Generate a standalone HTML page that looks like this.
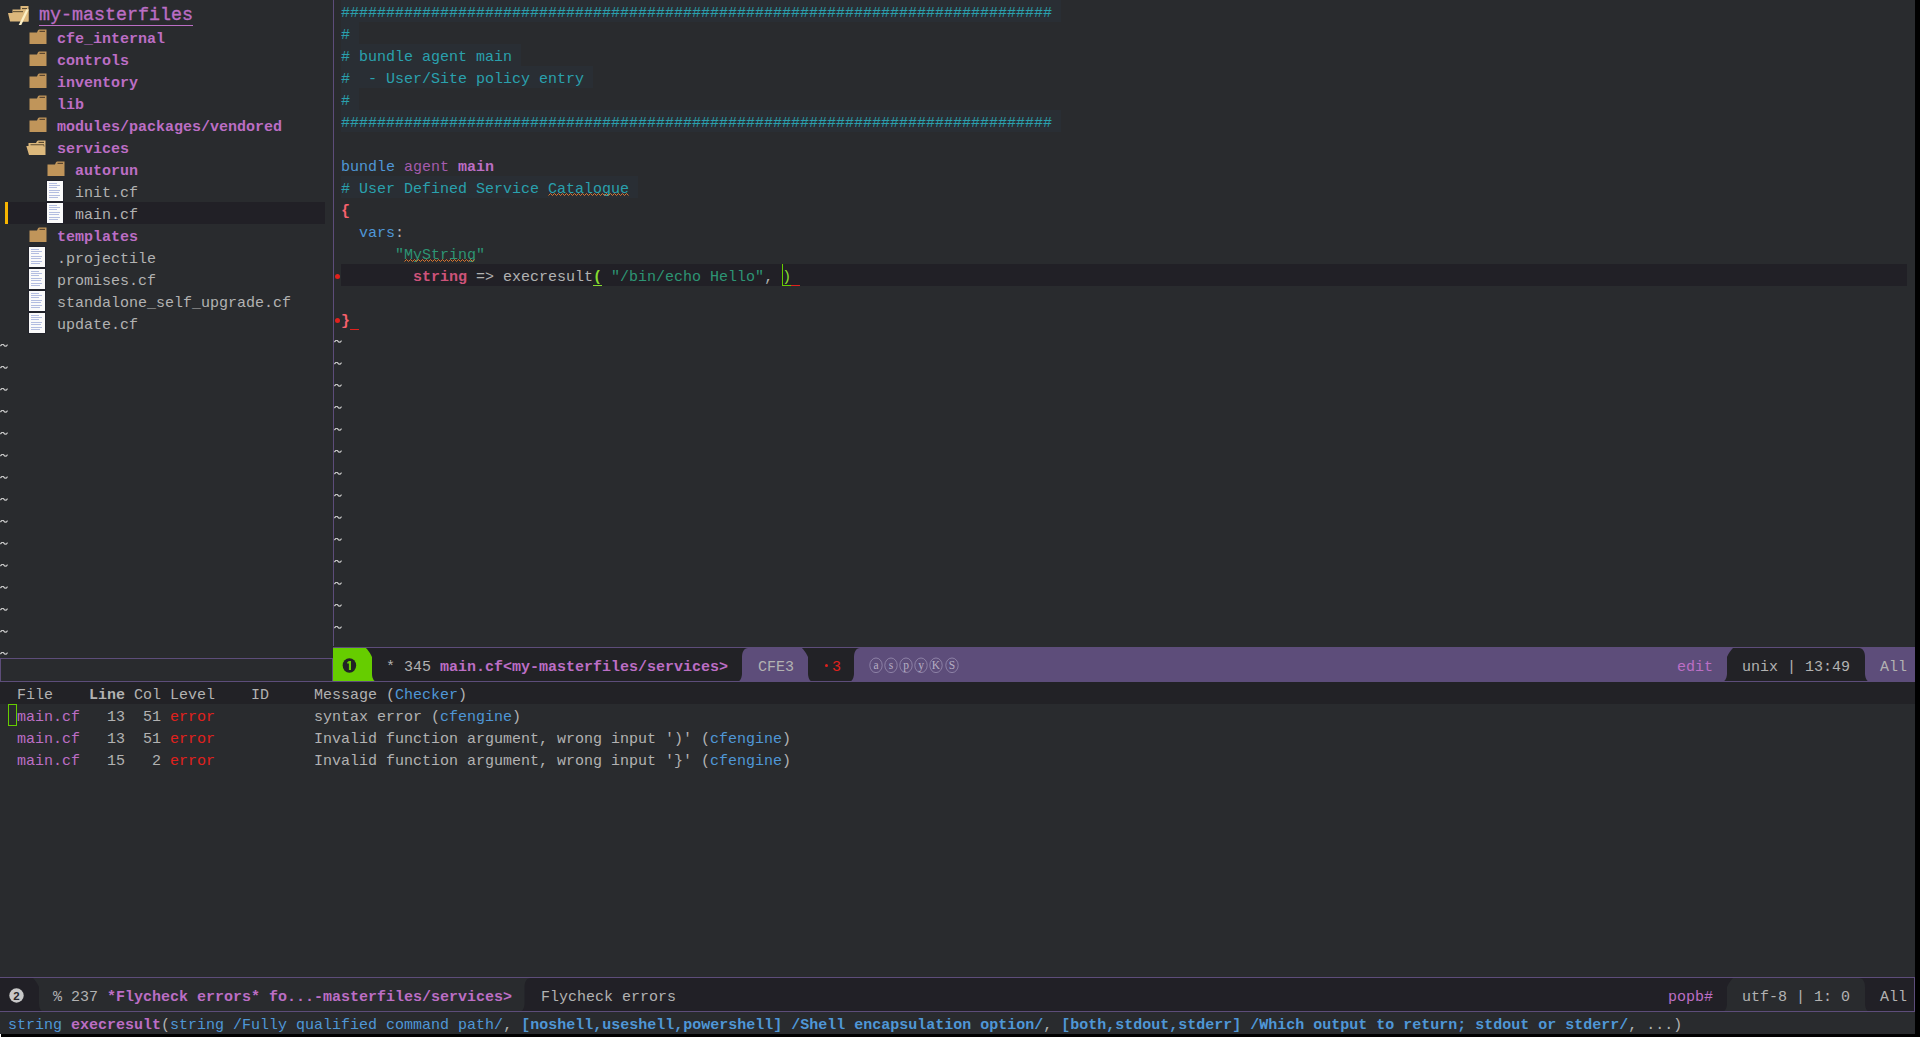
<!DOCTYPE html>
<html><head><meta charset="utf-8"><title>emacs</title>
<style>
html,body{margin:0;padding:0;}
body{width:1920px;height:1037px;overflow:hidden;position:relative;background:#292b2e;font-family:"Liberation Mono",monospace;}
.t{position:absolute;white-space:pre;font-size:15px;line-height:22px;color:#b2b2b2;}
.r{position:absolute;}
</style></head><body>
<div class="r" style="left:333px;top:0px;width:1px;height:646px;background:#5d4d7a;"></div>
<svg class="r" style="left:8px;top:5px" width="22" height="21" viewBox="0 0 22 21"><path d="M12.5 1 L20.5 1 L20.5 16.5 L12.5 16.5 Z" fill="#dcb87c"/><path d="M14 3 L19 3 L19 4.2 L14 4.2 Z" fill="#5a4a30"/><path d="M4.5 4.5 L20.5 4.5 L20.5 16.5 L2 16.5 L0 8 L4.5 8 Z" fill="#dcb87c"/><path d="M5 6 L15 6 L15 7.2 L5 7.2 Z" fill="#6b5a3a"/><path d="M18.2 4.5 L20.8 4.5 L13.3 20 L10.7 20 Z" fill="#fcefc4"/></svg>
<div class="t" style="left:39px;top:3px;font-size:18.33px;line-height:26px;color:#bc6ec5;-webkit-text-stroke:0.35px;">my-masterfiles</div>
<div class="r" style="left:39px;top:25px;width:154px;height:1px;background:#bc6ec5;"></div>
<svg class="r" style="left:29px;top:29px" width="18" height="16" viewBox="0 0 18 16"><path d="M0.5 3.5 L8 3.5 Q9 0.5 10 0.5 L17.5 0.5 L17.5 15 L0.5 15 Z" fill="#c0955a"/><path d="M10.5 1.8 L16 1.8 L16 3 L10.5 3 Z" fill="#5a4630"/></svg>
<div class="t" style="left:57px;top:29px;"><span style="color:#bc6ec5;font-weight:bold;">cfe_internal</span></div>
<svg class="r" style="left:29px;top:51px" width="18" height="16" viewBox="0 0 18 16"><path d="M0.5 3.5 L8 3.5 Q9 0.5 10 0.5 L17.5 0.5 L17.5 15 L0.5 15 Z" fill="#c0955a"/><path d="M10.5 1.8 L16 1.8 L16 3 L10.5 3 Z" fill="#5a4630"/></svg>
<div class="t" style="left:57px;top:51px;"><span style="color:#bc6ec5;font-weight:bold;">controls</span></div>
<svg class="r" style="left:29px;top:73px" width="18" height="16" viewBox="0 0 18 16"><path d="M0.5 3.5 L8 3.5 Q9 0.5 10 0.5 L17.5 0.5 L17.5 15 L0.5 15 Z" fill="#c0955a"/><path d="M10.5 1.8 L16 1.8 L16 3 L10.5 3 Z" fill="#5a4630"/></svg>
<div class="t" style="left:57px;top:73px;"><span style="color:#bc6ec5;font-weight:bold;">inventory</span></div>
<svg class="r" style="left:29px;top:95px" width="18" height="16" viewBox="0 0 18 16"><path d="M0.5 3.5 L8 3.5 Q9 0.5 10 0.5 L17.5 0.5 L17.5 15 L0.5 15 Z" fill="#c0955a"/><path d="M10.5 1.8 L16 1.8 L16 3 L10.5 3 Z" fill="#5a4630"/></svg>
<div class="t" style="left:57px;top:95px;"><span style="color:#bc6ec5;font-weight:bold;">lib</span></div>
<svg class="r" style="left:29px;top:117px" width="18" height="16" viewBox="0 0 18 16"><path d="M0.5 3.5 L8 3.5 Q9 0.5 10 0.5 L17.5 0.5 L17.5 15 L0.5 15 Z" fill="#c0955a"/><path d="M10.5 1.8 L16 1.8 L16 3 L10.5 3 Z" fill="#5a4630"/></svg>
<div class="t" style="left:57px;top:117px;"><span style="color:#bc6ec5;font-weight:bold;">modules/packages/vendored</span></div>
<svg class="r" style="left:26px;top:139.5px" width="21" height="16" viewBox="0 0 21 16"><path d="M2.5 3 L10 3 Q11 0.5 12 0.5 L19.5 0.5 L19.5 15 L3 15 L0.3 6 L2.5 6 Z" fill="#dcb87c"/><path d="M12.5 1.8 L18 1.8 L18 3 L12.5 3 Z" fill="#5a4a30"/><path d="M4.5 4.2 L18 4.2 L18.5 6.5 L17.7 6.5 L17.5 5.3 L4.5 5.3 Z" fill="#5a4a30"/></svg>
<div class="t" style="left:57px;top:139px;"><span style="color:#bc6ec5;font-weight:bold;">services</span></div>
<svg class="r" style="left:47px;top:161px" width="18" height="16" viewBox="0 0 18 16"><path d="M0.5 3.5 L8 3.5 Q9 0.5 10 0.5 L17.5 0.5 L17.5 15 L0.5 15 Z" fill="#c0955a"/><path d="M10.5 1.8 L16 1.8 L16 3 L10.5 3 Z" fill="#5a4630"/></svg>
<div class="t" style="left:75px;top:161px;"><span style="color:#bc6ec5;font-weight:bold;">autorun</span></div>
<svg class="r" style="left:46px;top:180px" width="18" height="22" viewBox="-1 -1 18 22"><rect x="-1" y="-1" width="18" height="22" fill="#1c1e2a" opacity="0.6"/><rect x="0" y="0" width="16" height="20" fill="#fafafa"/><rect x="2" y="2" width="8" height="1" fill="#b3bde0"/><rect x="2" y="4" width="11" height="1" fill="#b3bde0"/><rect x="2" y="6" width="8" height="1" fill="#b3bde0"/><rect x="2" y="9" width="11" height="1" fill="#b3bde0"/><rect x="2" y="11" width="10" height="1" fill="#b3bde0"/><rect x="2" y="14" width="11" height="1" fill="#b3bde0"/><rect x="2" y="16" width="9" height="1" fill="#b3bde0"/></svg>
<div class="t" style="left:75px;top:183px;"><span style="color:#b2b2b2;">init.cf</span></div>
<div class="r" style="left:8px;top:202px;width:317px;height:22px;background:#212026;"></div>
<div class="r" style="left:5px;top:202px;width:3px;height:22px;background:#f7b500;"></div>
<svg class="r" style="left:46px;top:202px" width="18" height="22" viewBox="-1 -1 18 22"><rect x="-1" y="-1" width="18" height="22" fill="#1c1e2a" opacity="0.6"/><rect x="0" y="0" width="16" height="20" fill="#fafafa"/><rect x="2" y="2" width="8" height="1" fill="#b3bde0"/><rect x="2" y="4" width="11" height="1" fill="#b3bde0"/><rect x="2" y="6" width="8" height="1" fill="#b3bde0"/><rect x="2" y="9" width="11" height="1" fill="#b3bde0"/><rect x="2" y="11" width="10" height="1" fill="#b3bde0"/><rect x="2" y="14" width="11" height="1" fill="#b3bde0"/><rect x="2" y="16" width="9" height="1" fill="#b3bde0"/></svg>
<div class="t" style="left:75px;top:205px;"><span style="color:#b2b2b2;">main.cf</span></div>
<svg class="r" style="left:29px;top:227px" width="18" height="16" viewBox="0 0 18 16"><path d="M0.5 3.5 L8 3.5 Q9 0.5 10 0.5 L17.5 0.5 L17.5 15 L0.5 15 Z" fill="#c0955a"/><path d="M10.5 1.8 L16 1.8 L16 3 L10.5 3 Z" fill="#5a4630"/></svg>
<div class="t" style="left:57px;top:227px;"><span style="color:#bc6ec5;font-weight:bold;">templates</span></div>
<svg class="r" style="left:28px;top:246px" width="18" height="22" viewBox="-1 -1 18 22"><rect x="-1" y="-1" width="18" height="22" fill="#1c1e2a" opacity="0.6"/><rect x="0" y="0" width="16" height="20" fill="#fafafa"/><rect x="2" y="2" width="8" height="1" fill="#b3bde0"/><rect x="2" y="4" width="11" height="1" fill="#b3bde0"/><rect x="2" y="6" width="8" height="1" fill="#b3bde0"/><rect x="2" y="9" width="11" height="1" fill="#b3bde0"/><rect x="2" y="11" width="10" height="1" fill="#b3bde0"/><rect x="2" y="14" width="11" height="1" fill="#b3bde0"/><rect x="2" y="16" width="9" height="1" fill="#b3bde0"/></svg>
<div class="t" style="left:57px;top:249px;"><span style="color:#b2b2b2;">.projectile</span></div>
<svg class="r" style="left:28px;top:268px" width="18" height="22" viewBox="-1 -1 18 22"><rect x="-1" y="-1" width="18" height="22" fill="#1c1e2a" opacity="0.6"/><rect x="0" y="0" width="16" height="20" fill="#fafafa"/><rect x="2" y="2" width="8" height="1" fill="#b3bde0"/><rect x="2" y="4" width="11" height="1" fill="#b3bde0"/><rect x="2" y="6" width="8" height="1" fill="#b3bde0"/><rect x="2" y="9" width="11" height="1" fill="#b3bde0"/><rect x="2" y="11" width="10" height="1" fill="#b3bde0"/><rect x="2" y="14" width="11" height="1" fill="#b3bde0"/><rect x="2" y="16" width="9" height="1" fill="#b3bde0"/></svg>
<div class="t" style="left:57px;top:271px;"><span style="color:#b2b2b2;">promises.cf</span></div>
<svg class="r" style="left:28px;top:290px" width="18" height="22" viewBox="-1 -1 18 22"><rect x="-1" y="-1" width="18" height="22" fill="#1c1e2a" opacity="0.6"/><rect x="0" y="0" width="16" height="20" fill="#fafafa"/><rect x="2" y="2" width="8" height="1" fill="#b3bde0"/><rect x="2" y="4" width="11" height="1" fill="#b3bde0"/><rect x="2" y="6" width="8" height="1" fill="#b3bde0"/><rect x="2" y="9" width="11" height="1" fill="#b3bde0"/><rect x="2" y="11" width="10" height="1" fill="#b3bde0"/><rect x="2" y="14" width="11" height="1" fill="#b3bde0"/><rect x="2" y="16" width="9" height="1" fill="#b3bde0"/></svg>
<div class="t" style="left:57px;top:293px;"><span style="color:#b2b2b2;">standalone_self_upgrade.cf</span></div>
<svg class="r" style="left:28px;top:312px" width="18" height="22" viewBox="-1 -1 18 22"><rect x="-1" y="-1" width="18" height="22" fill="#1c1e2a" opacity="0.6"/><rect x="0" y="0" width="16" height="20" fill="#fafafa"/><rect x="2" y="2" width="8" height="1" fill="#b3bde0"/><rect x="2" y="4" width="11" height="1" fill="#b3bde0"/><rect x="2" y="6" width="8" height="1" fill="#b3bde0"/><rect x="2" y="9" width="11" height="1" fill="#b3bde0"/><rect x="2" y="11" width="10" height="1" fill="#b3bde0"/><rect x="2" y="14" width="11" height="1" fill="#b3bde0"/><rect x="2" y="16" width="9" height="1" fill="#b3bde0"/></svg>
<div class="t" style="left:57px;top:315px;"><span style="color:#b2b2b2;">update.cf</span></div>
<svg class="r" style="left:0px;top:343px" width="8" height="5" viewBox="0 0 8 5"><path d="M0.4 3 L1.8 1.5 L3.3 1.5 L4.8 3.2 L6.2 3.2 L7.6 1.6" stroke="#c6c6c6" stroke-width="1.2" fill="none" stroke-linejoin="round"/></svg>
<svg class="r" style="left:0px;top:365px" width="8" height="5" viewBox="0 0 8 5"><path d="M0.4 3 L1.8 1.5 L3.3 1.5 L4.8 3.2 L6.2 3.2 L7.6 1.6" stroke="#c6c6c6" stroke-width="1.2" fill="none" stroke-linejoin="round"/></svg>
<svg class="r" style="left:0px;top:387px" width="8" height="5" viewBox="0 0 8 5"><path d="M0.4 3 L1.8 1.5 L3.3 1.5 L4.8 3.2 L6.2 3.2 L7.6 1.6" stroke="#c6c6c6" stroke-width="1.2" fill="none" stroke-linejoin="round"/></svg>
<svg class="r" style="left:0px;top:409px" width="8" height="5" viewBox="0 0 8 5"><path d="M0.4 3 L1.8 1.5 L3.3 1.5 L4.8 3.2 L6.2 3.2 L7.6 1.6" stroke="#c6c6c6" stroke-width="1.2" fill="none" stroke-linejoin="round"/></svg>
<svg class="r" style="left:0px;top:431px" width="8" height="5" viewBox="0 0 8 5"><path d="M0.4 3 L1.8 1.5 L3.3 1.5 L4.8 3.2 L6.2 3.2 L7.6 1.6" stroke="#c6c6c6" stroke-width="1.2" fill="none" stroke-linejoin="round"/></svg>
<svg class="r" style="left:0px;top:453px" width="8" height="5" viewBox="0 0 8 5"><path d="M0.4 3 L1.8 1.5 L3.3 1.5 L4.8 3.2 L6.2 3.2 L7.6 1.6" stroke="#c6c6c6" stroke-width="1.2" fill="none" stroke-linejoin="round"/></svg>
<svg class="r" style="left:0px;top:475px" width="8" height="5" viewBox="0 0 8 5"><path d="M0.4 3 L1.8 1.5 L3.3 1.5 L4.8 3.2 L6.2 3.2 L7.6 1.6" stroke="#c6c6c6" stroke-width="1.2" fill="none" stroke-linejoin="round"/></svg>
<svg class="r" style="left:0px;top:497px" width="8" height="5" viewBox="0 0 8 5"><path d="M0.4 3 L1.8 1.5 L3.3 1.5 L4.8 3.2 L6.2 3.2 L7.6 1.6" stroke="#c6c6c6" stroke-width="1.2" fill="none" stroke-linejoin="round"/></svg>
<svg class="r" style="left:0px;top:519px" width="8" height="5" viewBox="0 0 8 5"><path d="M0.4 3 L1.8 1.5 L3.3 1.5 L4.8 3.2 L6.2 3.2 L7.6 1.6" stroke="#c6c6c6" stroke-width="1.2" fill="none" stroke-linejoin="round"/></svg>
<svg class="r" style="left:0px;top:541px" width="8" height="5" viewBox="0 0 8 5"><path d="M0.4 3 L1.8 1.5 L3.3 1.5 L4.8 3.2 L6.2 3.2 L7.6 1.6" stroke="#c6c6c6" stroke-width="1.2" fill="none" stroke-linejoin="round"/></svg>
<svg class="r" style="left:0px;top:563px" width="8" height="5" viewBox="0 0 8 5"><path d="M0.4 3 L1.8 1.5 L3.3 1.5 L4.8 3.2 L6.2 3.2 L7.6 1.6" stroke="#c6c6c6" stroke-width="1.2" fill="none" stroke-linejoin="round"/></svg>
<svg class="r" style="left:0px;top:585px" width="8" height="5" viewBox="0 0 8 5"><path d="M0.4 3 L1.8 1.5 L3.3 1.5 L4.8 3.2 L6.2 3.2 L7.6 1.6" stroke="#c6c6c6" stroke-width="1.2" fill="none" stroke-linejoin="round"/></svg>
<svg class="r" style="left:0px;top:607px" width="8" height="5" viewBox="0 0 8 5"><path d="M0.4 3 L1.8 1.5 L3.3 1.5 L4.8 3.2 L6.2 3.2 L7.6 1.6" stroke="#c6c6c6" stroke-width="1.2" fill="none" stroke-linejoin="round"/></svg>
<svg class="r" style="left:0px;top:629px" width="8" height="5" viewBox="0 0 8 5"><path d="M0.4 3 L1.8 1.5 L3.3 1.5 L4.8 3.2 L6.2 3.2 L7.6 1.6" stroke="#c6c6c6" stroke-width="1.2" fill="none" stroke-linejoin="round"/></svg>
<svg class="r" style="left:0px;top:651px" width="8" height="5" viewBox="0 0 8 5"><path d="M0.4 3 L1.8 1.5 L3.3 1.5 L4.8 3.2 L6.2 3.2 L7.6 1.6" stroke="#c6c6c6" stroke-width="1.2" fill="none" stroke-linejoin="round"/></svg>
<div class="r" style="left:0;top:658px;width:331px;height:22px;border:1px solid #5d4d7a;background:#292b2e"></div>
<div class="r" style="left:341px;top:0px;width:720px;height:22px;background:#292e34;"></div>
<div class="t" style="left:341px;top:3px;"><span style="color:#2aa1ae;">###############################################################################</span></div>
<div class="r" style="left:341px;top:22px;width:18px;height:22px;background:#292e34;"></div>
<div class="t" style="left:341px;top:25px;"><span style="color:#2aa1ae;">#</span></div>
<div class="r" style="left:341px;top:44px;width:180px;height:22px;background:#292e34;"></div>
<div class="t" style="left:341px;top:47px;"><span style="color:#2aa1ae;"># bundle agent main</span></div>
<div class="r" style="left:341px;top:66px;width:252px;height:22px;background:#292e34;"></div>
<div class="t" style="left:341px;top:69px;"><span style="color:#2aa1ae;">#  - User/Site policy entry</span></div>
<div class="r" style="left:341px;top:88px;width:18px;height:22px;background:#292e34;"></div>
<div class="t" style="left:341px;top:91px;"><span style="color:#2aa1ae;">#</span></div>
<div class="r" style="left:341px;top:110px;width:720px;height:22px;background:#292e34;"></div>
<div class="t" style="left:341px;top:113px;"><span style="color:#2aa1ae;">###############################################################################</span></div>
<div class="t" style="left:341px;top:157px;"><span style="color:#4f97d7;">bundle</span> <span style="color:#a45bad;">agent</span> <span style="color:#bc6ec5;font-weight:bold;">main</span></div>
<div class="r" style="left:341px;top:176px;width:297px;height:22px;background:#292e34;"></div>
<div class="t" style="left:341px;top:179px;"><span style="color:#2aa1ae;"># User Defined Service Catalogue</span></div>
<svg class="r" style="left:548px;top:193px" width="81" height="4" viewBox="0 0 81 4"><polyline points="0.5,2.5 2.5,0.5 4.5,2.5 6.5,0.5 8.5,2.5 10.5,0.5 12.5,2.5 14.5,0.5 16.5,2.5 18.5,0.5 20.5,2.5 22.5,0.5 24.5,2.5 26.5,0.5 28.5,2.5 30.5,0.5 32.5,2.5 34.5,0.5 36.5,2.5 38.5,0.5 40.5,2.5 42.5,0.5 44.5,2.5 46.5,0.5 48.5,2.5 50.5,0.5 52.5,2.5 54.5,0.5 56.5,2.5 58.5,0.5 60.5,2.5 62.5,0.5 64.5,2.5 66.5,0.5 68.5,2.5 70.5,0.5 72.5,2.5 74.5,0.5 76.5,2.5 78.5,0.5 80.5,2.5" stroke="#dc752f" stroke-width="1" fill="none"/></svg>
<div class="t" style="left:341px;top:201px;"><span style="color:#f7606c;font-weight:bold;">{</span></div>
<div class="t" style="left:341px;top:223px;">  <span style="color:#4f97d7;">vars</span><span style="color:#b2b2b2;">:</span></div>
<div class="t" style="left:341px;top:245px;">      <span style="color:#2d9574;">&quot;MyString&quot;</span></div>
<svg class="r" style="left:404px;top:259px" width="72" height="4" viewBox="0 0 72 4"><polyline points="0.5,2.5 2.5,0.5 4.5,2.5 6.5,0.5 8.5,2.5 10.5,0.5 12.5,2.5 14.5,0.5 16.5,2.5 18.5,0.5 20.5,2.5 22.5,0.5 24.5,2.5 26.5,0.5 28.5,2.5 30.5,0.5 32.5,2.5 34.5,0.5 36.5,2.5 38.5,0.5 40.5,2.5 42.5,0.5 44.5,2.5 46.5,0.5 48.5,2.5 50.5,0.5 52.5,2.5 54.5,0.5 56.5,2.5 58.5,0.5 60.5,2.5 62.5,0.5 64.5,2.5 66.5,0.5 68.5,2.5 70.5,0.5" stroke="#dc752f" stroke-width="1" fill="none"/></svg>
<div class="r" style="left:341px;top:264px;width:1566px;height:22px;background:#212026;"></div>
<div class="t" style="left:341px;top:267px;">        <span style="color:#ce537a;font-weight:bold;">string</span><span style="color:#b2b2b2;"> =&gt; execresult</span><span style="color:#86dc2f;font-weight:bold;">(</span><span style="color:#b2b2b2;"> </span><span style="color:#2d9574;">&quot;/bin/echo Hello&quot;</span><span style="color:#b2b2b2;">, </span><span style="color:#86dc2f;">)</span></div>
<div class="r" style="left:593px;top:285px;width:9px;height:1px;background:#86dc2f;"></div>
<div class="r" style="left:782px;top:264px;width:1px;height:22px;background:#66cd00;"></div>
<div class="r" style="left:782px;top:285px;width:9px;height:1px;background:#66cd00;"></div>
<div class="r" style="left:791px;top:285px;width:9px;height:1px;background:#e0211d;"></div>
<div class="t" style="left:341px;top:311px;"><span style="color:#f7606c;font-weight:bold;">}</span></div>
<div class="r" style="left:350px;top:329px;width:9px;height:1px;background:#e0211d;"></div>
<div class="r" style="left:335px;top:274px;width:5px;height:5px;border-radius:50%;background:#e0211d"></div>
<div class="r" style="left:335px;top:318px;width:5px;height:5px;border-radius:50%;background:#e0211d"></div>
<svg class="r" style="left:334px;top:339px" width="8" height="5" viewBox="0 0 8 5"><path d="M0.4 3 L1.8 1.5 L3.3 1.5 L4.8 3.2 L6.2 3.2 L7.6 1.6" stroke="#c6c6c6" stroke-width="1.2" fill="none" stroke-linejoin="round"/></svg>
<svg class="r" style="left:334px;top:361px" width="8" height="5" viewBox="0 0 8 5"><path d="M0.4 3 L1.8 1.5 L3.3 1.5 L4.8 3.2 L6.2 3.2 L7.6 1.6" stroke="#c6c6c6" stroke-width="1.2" fill="none" stroke-linejoin="round"/></svg>
<svg class="r" style="left:334px;top:383px" width="8" height="5" viewBox="0 0 8 5"><path d="M0.4 3 L1.8 1.5 L3.3 1.5 L4.8 3.2 L6.2 3.2 L7.6 1.6" stroke="#c6c6c6" stroke-width="1.2" fill="none" stroke-linejoin="round"/></svg>
<svg class="r" style="left:334px;top:405px" width="8" height="5" viewBox="0 0 8 5"><path d="M0.4 3 L1.8 1.5 L3.3 1.5 L4.8 3.2 L6.2 3.2 L7.6 1.6" stroke="#c6c6c6" stroke-width="1.2" fill="none" stroke-linejoin="round"/></svg>
<svg class="r" style="left:334px;top:427px" width="8" height="5" viewBox="0 0 8 5"><path d="M0.4 3 L1.8 1.5 L3.3 1.5 L4.8 3.2 L6.2 3.2 L7.6 1.6" stroke="#c6c6c6" stroke-width="1.2" fill="none" stroke-linejoin="round"/></svg>
<svg class="r" style="left:334px;top:449px" width="8" height="5" viewBox="0 0 8 5"><path d="M0.4 3 L1.8 1.5 L3.3 1.5 L4.8 3.2 L6.2 3.2 L7.6 1.6" stroke="#c6c6c6" stroke-width="1.2" fill="none" stroke-linejoin="round"/></svg>
<svg class="r" style="left:334px;top:471px" width="8" height="5" viewBox="0 0 8 5"><path d="M0.4 3 L1.8 1.5 L3.3 1.5 L4.8 3.2 L6.2 3.2 L7.6 1.6" stroke="#c6c6c6" stroke-width="1.2" fill="none" stroke-linejoin="round"/></svg>
<svg class="r" style="left:334px;top:493px" width="8" height="5" viewBox="0 0 8 5"><path d="M0.4 3 L1.8 1.5 L3.3 1.5 L4.8 3.2 L6.2 3.2 L7.6 1.6" stroke="#c6c6c6" stroke-width="1.2" fill="none" stroke-linejoin="round"/></svg>
<svg class="r" style="left:334px;top:515px" width="8" height="5" viewBox="0 0 8 5"><path d="M0.4 3 L1.8 1.5 L3.3 1.5 L4.8 3.2 L6.2 3.2 L7.6 1.6" stroke="#c6c6c6" stroke-width="1.2" fill="none" stroke-linejoin="round"/></svg>
<svg class="r" style="left:334px;top:537px" width="8" height="5" viewBox="0 0 8 5"><path d="M0.4 3 L1.8 1.5 L3.3 1.5 L4.8 3.2 L6.2 3.2 L7.6 1.6" stroke="#c6c6c6" stroke-width="1.2" fill="none" stroke-linejoin="round"/></svg>
<svg class="r" style="left:334px;top:559px" width="8" height="5" viewBox="0 0 8 5"><path d="M0.4 3 L1.8 1.5 L3.3 1.5 L4.8 3.2 L6.2 3.2 L7.6 1.6" stroke="#c6c6c6" stroke-width="1.2" fill="none" stroke-linejoin="round"/></svg>
<svg class="r" style="left:334px;top:581px" width="8" height="5" viewBox="0 0 8 5"><path d="M0.4 3 L1.8 1.5 L3.3 1.5 L4.8 3.2 L6.2 3.2 L7.6 1.6" stroke="#c6c6c6" stroke-width="1.2" fill="none" stroke-linejoin="round"/></svg>
<svg class="r" style="left:334px;top:603px" width="8" height="5" viewBox="0 0 8 5"><path d="M0.4 3 L1.8 1.5 L3.3 1.5 L4.8 3.2 L6.2 3.2 L7.6 1.6" stroke="#c6c6c6" stroke-width="1.2" fill="none" stroke-linejoin="round"/></svg>
<svg class="r" style="left:334px;top:625px" width="8" height="5" viewBox="0 0 8 5"><path d="M0.4 3 L1.8 1.5 L3.3 1.5 L4.8 3.2 L6.2 3.2 L7.6 1.6" stroke="#c6c6c6" stroke-width="1.2" fill="none" stroke-linejoin="round"/></svg>
<svg class="r" style="left:333px;top:647px" width="1582" height="35" viewBox="333 -1 1582 35"><rect x="333" y="-1" width="1582" height="35" fill="#5d4d7a"/><rect x="333" y="0" width="1582" height="33" fill="#5d4d7a"/><path d="M 333 0 L 366 0 C 370 0 372 4 372 9 L 372 25.5 C 372 29.5 374 33 375 33 L 333 33 Z" fill="#66cd00"/><path d="M 366 0 L 748 0 C 744 0 742 4 742 9 L 742 25.5 C 742 29.5 740 33 739 33 L 375 33 C 374 33 372 29.5 372 25.5 L 372 9 C 370 4 366 0 366 0 Z" fill="#222226"/><path d="M 802 0 L 860 0 C 856 0 854 4 854 9 L 854 25.5 C 854 29.5 852 33 851 33 L 811 33 C 810 33 808 29.5 808 25.5 L 808 9 C 806 4 802 0 802 0 Z" fill="#222226"/><path d="M 1733 0 L 1859 0 C 1863 0 1865 4 1865 9 L 1865 25.5 C 1865 29.5 1867 33 1868 33 L 1724 33 C 1725 33 1727 29.5 1727 25.5 L 1727 9 C 1729 4 1733 0 1733 0 Z" fill="#222226"/></svg>
<div class="t" style="left:386px;top:657px;"><span style="color:#b2b2b2;">* 345 </span><span style="color:#bc6ec5;font-weight:bold;">main.cf&lt;my-masterfiles/services&gt;</span></div>
<div class="t" style="left:758px;top:657px;"><span style="color:#b2b2b2;">CFE3</span></div>
<div class="t" style="left:832px;top:657px;"><span style="color:#e0211d;">3</span></div>
<div class="r" style="left:825px;top:663.5px;width:3.4px;height:3.4px;border-radius:50%;background:#e0211d"></div>
<div class="t" style="left:1677px;top:657px;"><span style="color:#bc6ec5;">edit</span></div>
<div class="t" style="left:1742px;top:657px;"><span style="color:#b2b2b2;">unix | 13:49</span></div>
<div class="t" style="left:1880px;top:657px;"><span style="color:#b2b2b2;">All</span></div>
<svg class="r" style="left:342px;top:658px" width="15" height="15" viewBox="0 0 15 15"><ellipse cx="7.4" cy="7.5" rx="6.75" ry="7.3" fill="#222226"/><path d="M5.2 4.3 L6.9 2.9 L9 2.9 L9 12.1 L6.9 12.1 L6.9 5.4 L5.2 5.4 Z" fill="#66cd00"/></svg>
<svg class="r" style="left:869px;top:657px" width="15" height="17" viewBox="0 0 15 17"><ellipse cx="7" cy="8.3" rx="6.2" ry="7.3" stroke="#a197b8" stroke-width="0.7" fill="none"/><text x="7" y="12" text-anchor="middle" font-family="Liberation Serif" font-size="11.5" fill="#b6afc4">a</text></svg>
<svg class="r" style="left:884px;top:657px" width="15" height="17" viewBox="0 0 15 17"><ellipse cx="7" cy="8.3" rx="6.2" ry="7.3" stroke="#a197b8" stroke-width="0.7" fill="none"/><text x="7" y="12" text-anchor="middle" font-family="Liberation Serif" font-size="11.5" fill="#b6afc4">s</text></svg>
<svg class="r" style="left:899px;top:657px" width="15" height="17" viewBox="0 0 15 17"><ellipse cx="7" cy="8.3" rx="6.2" ry="7.3" stroke="#a197b8" stroke-width="0.7" fill="none"/><text x="7" y="12" text-anchor="middle" font-family="Liberation Serif" font-size="11.5" fill="#b6afc4">p</text></svg>
<svg class="r" style="left:914px;top:657px" width="15" height="17" viewBox="0 0 15 17"><ellipse cx="7" cy="8.3" rx="6.2" ry="7.3" stroke="#a197b8" stroke-width="0.7" fill="none"/><text x="7" y="12" text-anchor="middle" font-family="Liberation Serif" font-size="11.5" fill="#b6afc4">y</text></svg>
<svg class="r" style="left:929px;top:657px" width="15" height="17" viewBox="0 0 15 17"><ellipse cx="7" cy="8.3" rx="6.2" ry="7.3" stroke="#a197b8" stroke-width="0.7" fill="none"/><text x="7" y="12" text-anchor="middle" font-family="Liberation Serif" font-size="11.5" fill="#b6afc4">K</text></svg>
<svg class="r" style="left:945px;top:657px" width="15" height="17" viewBox="0 0 15 17"><ellipse cx="7" cy="8.3" rx="6.2" ry="7.3" stroke="#a197b8" stroke-width="0.7" fill="none"/><text x="7" y="12" text-anchor="middle" font-family="Liberation Serif" font-size="11.5" fill="#b6afc4">S</text></svg>
<div class="r" style="left:0px;top:682px;width:1915px;height:22px;background:#222226;"></div>
<div class="t" style="left:17px;top:685px;"><span style="color:#b2b2b2;">File</span></div>
<div class="t" style="left:89px;top:685px;"><span style="color:#b2b2b2;font-weight:bold;">Line</span></div>
<div class="t" style="left:134px;top:685px;"><span style="color:#b2b2b2;">Col</span></div>
<div class="t" style="left:170px;top:685px;"><span style="color:#b2b2b2;">Level</span></div>
<div class="t" style="left:251px;top:685px;"><span style="color:#b2b2b2;">ID</span></div>
<div class="t" style="left:314px;top:685px;"><span style="color:#b2b2b2;">Message (</span><span style="color:#4f97d7;">Checker</span><span style="color:#b2b2b2;">)</span></div>
<div class="t" style="left:17px;top:707px;"><span style="color:#bc6ec5;">main.cf</span></div>
<div class="t" style="left:107px;top:707px;"><span style="color:#b2b2b2;">13</span></div>
<div class="t" style="left:143px;top:707px;"><span style="color:#b2b2b2;">51</span></div>
<div class="t" style="left:170px;top:707px;"><span style="color:#e0211d;">error</span></div>
<div class="t" style="left:314px;top:707px;"><span style="color:#b2b2b2;">syntax error (</span><span style="color:#4f97d7;">cfengine</span><span style="color:#b2b2b2;">)</span></div>
<div class="t" style="left:17px;top:729px;"><span style="color:#bc6ec5;">main.cf</span></div>
<div class="t" style="left:107px;top:729px;"><span style="color:#b2b2b2;">13</span></div>
<div class="t" style="left:143px;top:729px;"><span style="color:#b2b2b2;">51</span></div>
<div class="t" style="left:170px;top:729px;"><span style="color:#e0211d;">error</span></div>
<div class="t" style="left:314px;top:729px;"><span style="color:#b2b2b2;">Invalid function argument, wrong input &#x27;)&#x27; (</span><span style="color:#4f97d7;">cfengine</span><span style="color:#b2b2b2;">)</span></div>
<div class="t" style="left:17px;top:751px;"><span style="color:#bc6ec5;">main.cf</span></div>
<div class="t" style="left:107px;top:751px;"><span style="color:#b2b2b2;">15</span></div>
<div class="t" style="left:152px;top:751px;"><span style="color:#b2b2b2;">2</span></div>
<div class="t" style="left:170px;top:751px;"><span style="color:#e0211d;">error</span></div>
<div class="t" style="left:314px;top:751px;"><span style="color:#b2b2b2;">Invalid function argument, wrong input &#x27;}&#x27; (</span><span style="color:#4f97d7;">cfengine</span><span style="color:#b2b2b2;">)</span></div>
<div class="r" style="left:8px;top:704px;width:7px;height:20px;border:1px solid #66cd00"></div>
<svg class="r" style="left:0;top:977px" width="1915" height="35" viewBox="0 -1 1915 35"><rect x="0" y="-1" width="1915" height="35" fill="#5d4d7a"/><rect x="0" y="0" width="1914" height="33" fill="#212026"/><path d="M 33 0 L 530.5 0 C 526.5 0 524.5 4 524.5 9 L 524.5 25.5 C 524.5 29.5 522.5 33 521.5 33 L 42 33 C 41 33 39 29.5 39 25.5 L 39 9 C 37 4 33 0 33 0 Z" fill="#292b2e"/><path d="M 1733 0 L 1859 0 C 1863 0 1865 4 1865 9 L 1865 25.5 C 1865 29.5 1867 33 1868 33 L 1724 33 C 1725 33 1727 29.5 1727 25.5 L 1727 9 C 1729 4 1733 0 1733 0 Z" fill="#292b2e"/></svg>
<svg class="r" style="left:9px;top:988px" width="15" height="15" viewBox="0 0 15 15"><circle cx="7.5" cy="7.5" r="7.2" fill="#c8c8c8"/><text x="7.5" y="11.6" text-anchor="middle" font-family="Liberation Sans" font-weight="bold" font-size="11.5" fill="#25262a">2</text></svg>
<div class="t" style="left:53px;top:987px;"><span style="color:#b2b2b2;">% 237 </span><span style="color:#bc6ec5;font-weight:bold;">*Flycheck errors* fo...-masterfiles/services&gt;</span></div>
<div class="t" style="left:541px;top:987px;"><span style="color:#b2b2b2;">Flycheck errors</span></div>
<div class="t" style="left:1668px;top:987px;"><span style="color:#bc6ec5;">popb#</span></div>
<div class="t" style="left:1742px;top:987px;"><span style="color:#b2b2b2;">utf-8 | 1: 0</span></div>
<div class="t" style="left:1880px;top:987px;"><span style="color:#b2b2b2;">All</span></div>
<div class="t" style="left:8px;top:1015px;"><span style="color:#4f97d7;">string</span> <span style="color:#bc6ec5;font-weight:bold;">execresult</span><span style="color:#b2b2b2;">(</span><span style="color:#4f97d7;">string /Fully qualified command path/</span><span style="color:#b2b2b2;">, </span><span style="color:#4f97d7;font-weight:bold;">[noshell,useshell,powershell] /Shell encapsulation option/</span><span style="color:#b2b2b2;">, </span><span style="color:#4f97d7;font-weight:bold;">[both,stdout,stderr] /Which output to return; stdout or stderr/</span><span style="color:#b2b2b2;">, ...)</span></div>
<div class="r" style="left:0px;top:1034px;width:1920px;height:3px;background:#000;"></div>
<div class="r" style="left:0px;top:1034px;width:1px;height:3px;background:#ffffff;"></div>
<div class="r" style="left:1915px;top:0px;width:5px;height:1037px;background:#000;"></div>
</body></html>
